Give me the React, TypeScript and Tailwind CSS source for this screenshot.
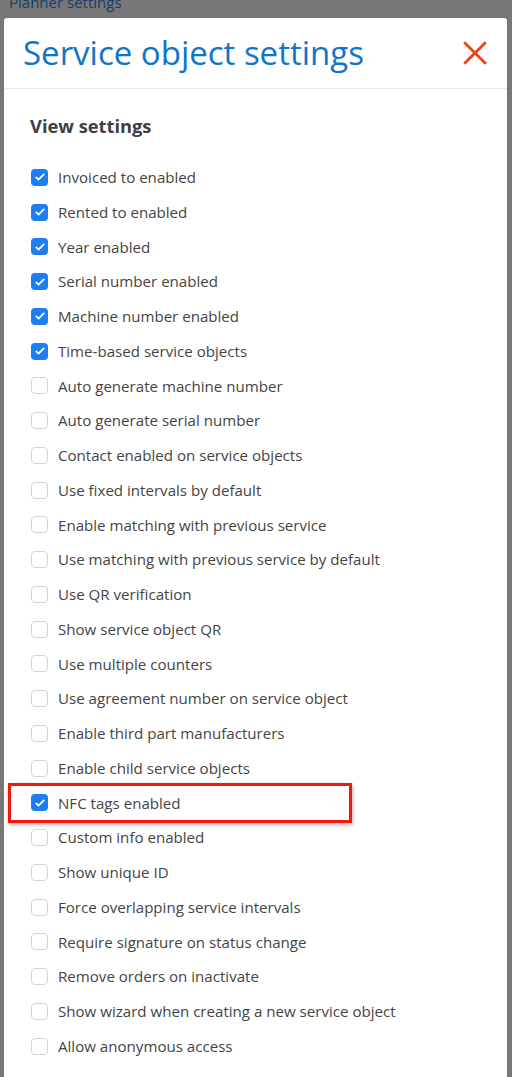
import * as React from 'react';

const settings: { label: string; checked: boolean; highlight?: boolean }[] = [
    { label: 'Invoiced to enabled', checked: true },
    { label: 'Rented to enabled', checked: true },
    { label: 'Year enabled', checked: true },
    { label: 'Serial number enabled', checked: true },
    { label: 'Machine number enabled', checked: true },
    { label: 'Time-based service objects', checked: true },
    { label: 'Auto generate machine number', checked: false },
    { label: 'Auto generate serial number', checked: false },
    { label: 'Contact enabled on service objects', checked: false },
    { label: 'Use fixed intervals by default', checked: false },
    { label: 'Enable matching with previous service', checked: false },
    { label: 'Use matching with previous service by default', checked: false },
    { label: 'Use QR verification', checked: false },
    { label: 'Show service object QR', checked: false },
    { label: 'Use multiple counters', checked: false },
    { label: 'Use agreement number on service object', checked: false },
    { label: 'Enable third part manufacturers', checked: false },
    { label: 'Enable child service objects', checked: false },
    { label: 'NFC tags enabled', checked: true, highlight: true },
    { label: 'Custom info enabled', checked: false },
    { label: 'Show unique ID', checked: false },
    { label: 'Force overlapping service intervals', checked: false },
    { label: 'Require signature on status change', checked: false },
    { label: 'Remove orders on inactivate', checked: false },
    { label: 'Show wizard when creating a new service object', checked: false },
    { label: 'Allow anonymous access', checked: false },
];

const Checkbox = ({ checked }: { checked: boolean }) =>
    checked ? (
        <span className="flex h-[17px] w-[17px] shrink-0 items-center justify-center rounded-[4px] bg-[#1c7ef2]">
            <svg viewBox="0 0 16 16" className="h-[12px] w-[12px]" fill="none">
                <path d="M3 8.5l3 3 7-7" stroke="white" strokeWidth="2.4" strokeLinecap="round" strokeLinejoin="round" />
            </svg>
        </span>
    ) : (
        <span className="h-[17px] w-[17px] shrink-0 rounded-[4px] border border-[#d4d4d4] bg-white" />
    );

const SettingRow = ({ label, checked, highlight }: { label: string; checked: boolean; highlight?: boolean }) => (
    <div className="relative flex h-[34.76px] items-center gap-[10px] pl-[27px]">
        {highlight && (
            <div className="absolute left-[4px] top-[-3px] h-[40px] w-[344px] border-[3px] border-[#f2170f] shadow-[1px_2px_4px_rgba(0,0,0,0.3)]" />
        )}
        <Checkbox checked={checked} />
        <span className="text-[15.1px] text-[#444]">{label}</span>
    </div>
);

export default function App() {
    return (
        <div
            className="h-[1077px] overflow-hidden bg-[#777777] pl-[4px] pr-[5px]"
            style={{ fontFamily: '"Open Sans", sans-serif' }}
        >
            <div className="-mt-[9px] h-[27px] pl-[5px] text-[15px] leading-[22px] text-[#173d6b]">Planner settings</div>
            <div className="h-[1100px] rounded-t-[3px] bg-white">
                <div className="flex h-[71px] items-center justify-between border-b border-[#ebebeb] pl-[19px] pr-[19px]">
                    <h1 className="text-[33px] font-normal leading-[44px] text-[#1075c9]">Service object settings</h1>
                    <svg viewBox="0 0 24 24" className="h-[26px] w-[26px]" fill="none">
                        <path d="M2 2l20 20M22 2L2 22" stroke="#ea4318" strokeWidth="2.6" />
                    </svg>
                </div>
                <div className="pt-[24px]">
                    <h2 className="pl-[26px] text-[18.3px] font-bold leading-[26px] text-[#3f3f3f]">View settings</h2>
                    <div className="mt-[21px]">
                        {settings.map((s) => (
                            <SettingRow key={s.label} {...s} />
                        ))}
                    </div>
                </div>
            </div>
        </div>
    );
}
